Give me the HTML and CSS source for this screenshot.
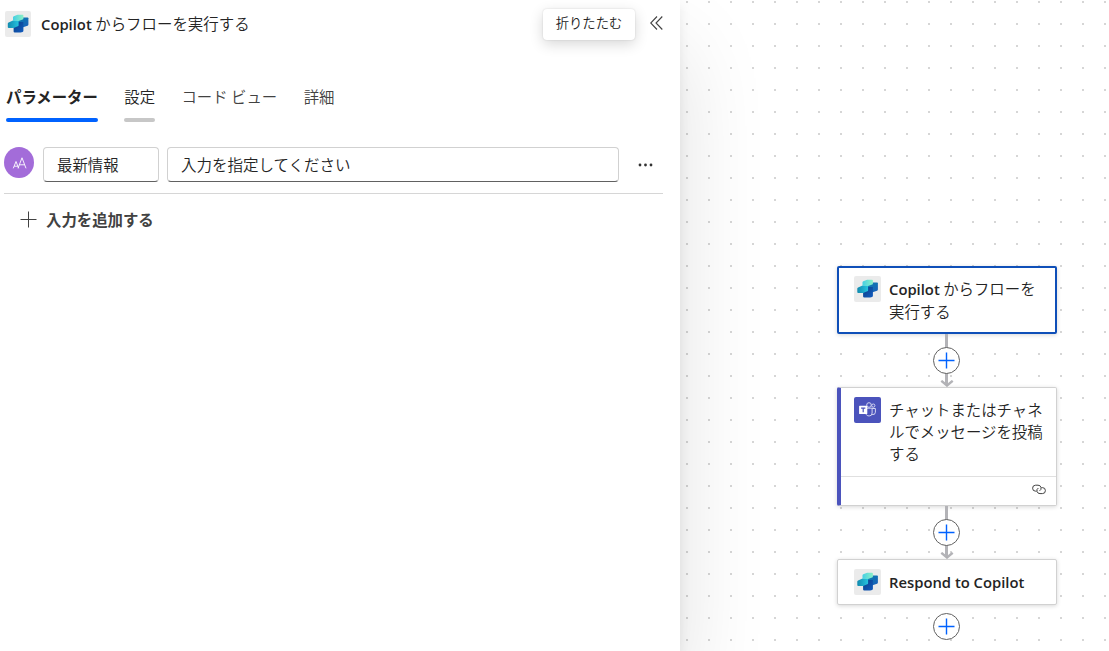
FILE: index.html
```html
<!DOCTYPE html>
<html lang="ja">
<head>
  <meta charset="UTF-8">
  <title>Copilot からフローを実行する</title>
  <link rel="stylesheet" href="styles.css">
</head>
<body>

  <!-- shared icons -->
  <svg class="defs" width="0" height="0">
    <defs>
      <linearGradient id="mint" x1="0" y1="0" x2="1" y2="0">
        <stop offset="0" stop-color="#45cfe3"/>
        <stop offset="1" stop-color="#8cf0c6"/>
      </linearGradient>
      <linearGradient id="teal" x1="0" y1="0" x2="1" y2="0">
        <stop offset="0" stop-color="#128aae"/>
        <stop offset="1" stop-color="#25c3df"/>
      </linearGradient>
      <linearGradient id="sky" x1="0" y1="0" x2="1" y2="1">
        <stop offset="0" stop-color="#0a7fae"/>
        <stop offset="1" stop-color="#1b5fba"/>
      </linearGradient>
      <linearGradient id="navy" x1="0" y1="0" x2="1" y2="1">
        <stop offset="0" stop-color="#0a3f86"/>
        <stop offset="1" stop-color="#125cc0"/>
      </linearGradient>
    </defs>
    <symbol id="copilot" viewBox="0 0 26 26">
      <path fill="url(#sky)" d="M12 9 L18 6.5 H22.6 Q23.4 6.5 23.4 7.3 V13.6 Q23.4 14.4 22.6 14.7 L18 16.2 H12 Z"/>
      <path fill="url(#navy)" d="M8.6 16 L13 14 V11 H18.4 V19.8 Q18.4 20.6 17.6 20.9 L15.6 21.6 H9.8 Q8.6 21.6 8.6 20.6 Z"/>
      <path fill="url(#teal)" d="M2.8 12.5 Q2.8 11.7 3.6 11.4 L8 9.6 H13.6 V14.2 Q13.6 15 12.8 15.3 L8.6 17 H3.8 Q2.8 17 2.8 16.2 Z"/>
      <path fill="url(#mint)" d="M8 6.3 Q8 5.5 8.8 5.2 L12.6 3.8 H17.6 Q18.4 3.8 18.4 4.6 V7.6 Q18.4 8.4 17.6 8.6 L13.6 10 H8.8 Q8 10 8 9.2 Z"/>
    </symbol>
    <symbol id="plus" viewBox="0 0 17 17">
      <path d="M8.5 .5 V16.5 M.5 8.5 H16.5" fill="none" stroke="currentColor"/>
    </symbol>
  </svg>

  <div class="designer">
    <section class="panel">
      <header class="panel-header">
        <span class="tile"><svg><use href="#copilot"/></svg></span>
        <h1><b>Copilot</b> からフローを実行する</h1>
        <button class="collapse">折りたたむ</button>
        <svg class="chevrons" viewBox="0 0 13 14">
          <path d="M7 .5 L.7 7 L7 13.5 M12.3 .5 L6 7 L12.3 13.5"/>
        </svg>
      </header>

      <nav class="tabs">
        <a class="tab active">パラメーター</a>
        <a class="tab hover">設定</a>
        <a class="tab">コード ビュー</a>
        <a class="tab">詳細</a>
      </nav>

      <div class="param">
        <span class="avatar">
          <svg viewBox="0 0 30 30">
            <path d="M9.3 21.3 L12 14.5 L14.7 21.3 M10.2 19.2 H13.8 M14 21.3 L18 10.8 L22 21.3 M15.4 17.8 H20.6"/>
          </svg>
        </span>
        <input class="name" type="text" value="最新情報">
        <input class="value" type="text" value="入力を指定してください">
        <svg class="more" viewBox="0 0 15 4">
          <circle cx="2" cy="2" r="1.4"/><circle cx="7.5" cy="2" r="1.4"/><circle cx="13" cy="2" r="1.4"/>
        </svg>
      </div>

      <div class="add-input">
        <svg><use href="#plus"/></svg>
        <span>入力を追加する</span>
      </div>
    </section>

    <main class="canvas">
      <div class="card selected">
        <span class="tile"><svg><use href="#copilot"/></svg></span>
        <p><b>Copilot</b> からフローを<br>実行する</p>
      </div>

      <div class="edge">
        <span class="add"><svg><use href="#plus"/></svg></span>
        <svg class="arrow" viewBox="0 0 14 7"><path d="M1.3 .8 L7 5.5 L12.7 .8"/></svg>
      </div>

      <div class="card teams">
        <div class="card-body">
          <span class="tile">
            <svg viewBox="0 0 26 26">
              <g fill="none" stroke="#d3d5f1" stroke-width="1">
                <circle cx="14.5" cy="8" r="2.3"/>
                <circle cx="18.8" cy="8.6" r="1.6"/>
                <path d="M12.5 11.2 H17.6 V16 Q17.6 19 14.6 19 Q12.3 19 11.5 17.2"/>
                <path d="M17.6 11.5 H20.9 V15.2 Q20.9 18 17.6 17.6"/>
              </g>
              <rect x="4.6" y="8.8" width="8.2" height="8.2" rx=".6" fill="#fff"/>
              <path d="M6.6 11.1 H10.8 M8.7 11.1 V15.3" fill="none" stroke="#4b53bc" stroke-width="1.2"/>
            </svg>
          </span>
          <p>チャットまたはチャネ<br>ルでメッセージを投稿<br>する</p>
        </div>
        <div class="card-footer">
          <svg viewBox="0 0 14 11">
            <path d="M4.6 7.2 H3.6 A3 3 0 0 1 3.6 1.2 H6 A3 3 0 0 1 7.6 6.8"/>
            <path d="M9.4 3.6 H10.4 A3 3 0 0 1 10.4 9.6 H8 A3 3 0 0 1 6.4 4"/>
          </svg>
        </div>
      </div>

      <div class="edge">
        <span class="add"><svg><use href="#plus"/></svg></span>
        <svg class="arrow" viewBox="0 0 14 7"><path d="M1.3 .8 L7 5.5 L12.7 .8"/></svg>
      </div>

      <div class="card respond">
        <span class="tile"><svg><use href="#copilot"/></svg></span>
        <p><b>Respond to Copilot</b></p>
      </div>
      <span class="add last"><svg><use href="#plus"/></svg></span>
    </main>
  </div>

</body>
</html>
```
FILE: styles.css
```css
* {
  box-sizing: border-box;
}
body {
  margin: 0;
  overflow: hidden;
  font-family: "Noto Sans CJK JP", sans-serif;
  font-size: 15.4px;
  font-weight: 350;
  color: #242424;
  background: #fff;
}
svg {
  display: block;
}
.defs {
  position: absolute;
}
b {
  font-family: "Open Sans", "Noto Sans", sans-serif;
  font-size: 14.8px;
  font-weight: 560;
}
.designer {
  display: flex;
  height: 651px;
}

/* left panel */
.panel {
  position: relative;
  z-index: 1;
  width: 680px;
  background: #fff;
  box-shadow: 0 48px 84px rgba(0, 0, 0, 0.12), 0 5px 12px rgba(0, 0, 0, 0.08);
}
.panel-header {
  display: flex;
  align-items: center;
  height: 48px;
  padding: 0 17px 0 5px;
}
.panel-header h1 {
  flex: 1;
  margin: -2px 0 0 10px;
  font-size: 15.45px;
  font-weight: 350;
  line-height: 22px;
}
.tile {
  flex: none;
  width: 26px;
  height: 26px;
  border-radius: 2px;
  background: #ebebeb;
}
.tile svg {
  width: 100%;
  height: 100%;
}
.collapse {
  width: 92px;
  height: 31px;
  margin: 1px 15px 0 0;
  padding: 0 0 4px;
  border: none;
  border-radius: 4px;
  background: #fff;
  color: #242424;
  font-family: inherit;
  font-size: 13.3px;
  font-weight: 350;
  box-shadow: 0 0 2px rgba(0, 0, 0, 0.14), 0 4px 14px rgba(0, 0, 0, 0.16);
}
.chevrons {
  width: 13px;
  height: 14px;
  margin-top: -3px;
  fill: none;
  stroke: #424242;
  stroke-width: 1.1;
}
.tabs {
  display: flex;
  gap: 26.4px;
  height: 74px;
  padding: 37px 0 0 6px;
}
.tab {
  height: 37px;
  color: #424242;
  font-size: 15.4px;
  line-height: 22px;
}
.tab::after {
  content: "";
  display: block;
  height: 4px;
  margin-top: 11px;
  border-radius: 2px;
}
.tab.active {
  color: #242424;
  font-weight: 700;
}
.tab.active::after {
  background: #0062ff;
}
.tab.hover {
  color: #242424;
}
.tab.hover::after {
  background: #c7c7c7;
}
.param {
  display: flex;
  align-items: flex-start;
  width: 659px;
  height: 72px;
  margin-left: 4px;
  padding-top: 25px;
  border-bottom: 1px solid #d6d6d6;
}
.avatar {
  width: 30px;
  height: 31px;
  margin-right: 9px;
  border-radius: 50%;
  background: #a36cd9;
}
.avatar path {
  fill: none;
  stroke: #fff;
  stroke-width: 0.9;
}
input {
  height: 35px;
  padding: 0 13px 2px;
  border: 1px solid #d1d1d1;
  border-bottom-color: #616161;
  border-radius: 4px;
  color: #242424;
  font: inherit;
}
.name {
  width: 116px;
  margin-right: 8px;
}
.value {
  width: 452px;
  font-size: 15.5px;
}
.more {
  width: 15px;
  height: 4px;
  margin: 16px 0 0 18.5px;
  fill: #333;
}
.add-input {
  display: flex;
  align-items: flex-start;
  gap: 9px;
  padding: 13px 0 0 20px;
  color: #424242;
  font-weight: 700;
  line-height: 24px;
}
.add-input svg {
  width: 17px;
  height: 17px;
  margin-top: 4px;
}

/* flow canvas */
.canvas {
  flex: 1;
  display: flex;
  flex-direction: column;
  align-items: center;
  padding: 266px 0 0 104px;
  background: conic-gradient(from 90deg at 20px 20px, #d6d6d6 25%, transparent 0) 8px 3px / 22px 22px;
}
.card {
  display: flex;
  flex: none;
  width: 220px;
  padding: 9px 0 0 16px;
  border: 1px solid #d1d1d1;
  border-radius: 2px;
  background: #fff;
  box-shadow: 0 1px 4px rgba(0, 0, 0, 0.16);
}
.card .tile {
  width: 27px;
}
.card p {
  margin: 0 0 0 8.5px;
  line-height: 22px;
  white-space: nowrap;
}
.card.selected {
  height: 68px;
  padding: 8px 0 0 15px;
  border: 2px solid #0f4fb8;
}
.selected p {
  margin-top: 1px;
}
.card.teams {
  display: block;
  height: 119px;
  padding: 0;
  border-left: 4px solid #4b53bc;
}
.card-body {
  display: flex;
  height: 89px;
  padding: 9px 0 0 13px;
  border-bottom: 1px solid #e0e0e0;
}
.card-body p {
  margin-top: 1px;
}
.teams .tile {
  background: #4b53bc;
}
.card-footer {
  display: flex;
  justify-content: flex-end;
  padding: 7px 9.5px;
}
.card-footer svg {
  width: 14px;
  height: 11px;
  fill: none;
  stroke: #424242;
}
.card.respond {
  height: 46px;
}
.respond p {
  margin-top: 1px;
}
.edge {
  display: flex;
  flex: none;
  flex-direction: column;
  align-items: center;
  width: 27px;
  height: 53px;
  padding-top: 13px;
  background: linear-gradient(#b3b3b7, #b3b3b7) center top / 3px 51px no-repeat;
}
.add {
  display: flex;
  flex: none;
  align-items: center;
  justify-content: center;
  width: 27px;
  height: 27px;
  border: 1px solid #616161;
  border-radius: 50%;
  background: #fff;
  color: #0062ff;
}
.add svg {
  width: 17px;
  height: 17px;
  stroke-width: 1.4;
}
.arrow {
  width: 14px;
  height: 7px;
  margin-top: 6px;
  fill: none;
  stroke: #b3b3b7;
  stroke-width: 2.4;
}
.add.last {
  margin-top: 8px;
}
```
